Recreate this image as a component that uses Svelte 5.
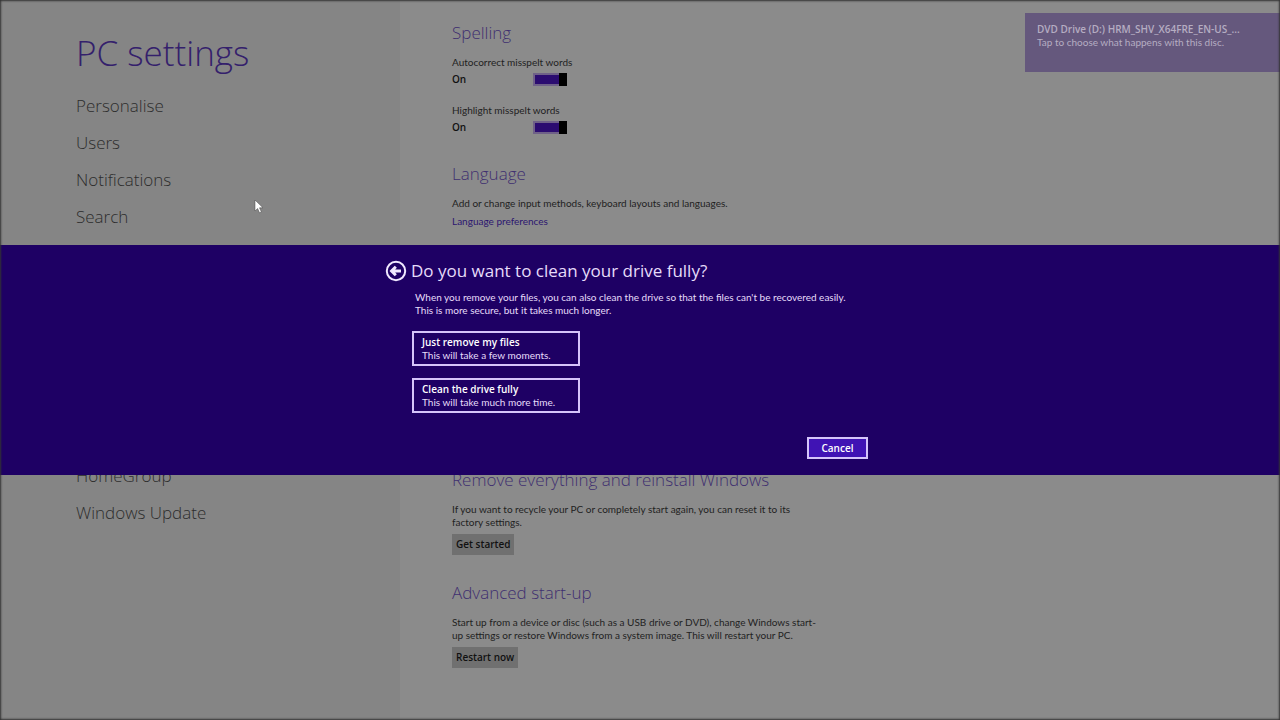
<script lang="ts">
  const categories = [
    "Personalise",
    "Users",
    "Notifications",
    "Search",
    "Share",
    "General",
    "Privacy",
    "Devices",
    "Ease of Access",
    "Sync your settings",
    "HomeGroup",
    "Windows Update",
  ];

  let autocorrect = true;
  let highlight = true;
</script>

<div class="screen">
  <nav>
    <h1>PC settings</h1>
    <ul>
      {#each categories as category}
        <li><a href="#settings">{category}</a></li>
      {/each}
    </ul>
  </nav>

  <main>
    <section>
      <h2>Spelling</h2>
      <div class="setting">
        <label for="autocorrect">Autocorrect misspelt words</label>
        <div class="switch">
          <span>{autocorrect ? "On" : "Off"}</span>
          <input id="autocorrect" type="checkbox" bind:checked={autocorrect} />
        </div>
      </div>
      <div class="setting">
        <label for="highlight">Highlight misspelt words</label>
        <div class="switch">
          <span>{highlight ? "On" : "Off"}</span>
          <input id="highlight" type="checkbox" bind:checked={highlight} />
        </div>
      </div>
    </section>

    <section>
      <h2>Language</h2>
      <p>Add or change input methods, keyboard layouts and languages.</p>
      <a class="more" href="#language">Language preferences</a>
    </section>

    <div class="recovery">
      <section>
        <h2>Remove everything and reinstall Windows</h2>
        <p>
          If you want to recycle your PC or completely start again, you can
          reset it to its factory settings.
        </p>
        <button>Get started</button>
      </section>

      <section>
        <h2>Advanced start-up</h2>
        <p>
          Start up from a device or disc (such as a USB drive or DVD), change
          Windows start-up settings or restore Windows from a system image. This
          will restart your PC.
        </p>
        <button>Restart now</button>
      </section>
    </div>
  </main>

  <aside class="toast">
    <strong>DVD Drive (D:) HRM_SHV_X64FRE_EN-US_...</strong>
    <span>Tap to choose what happens with this disc.</span>
  </aside>

  <svg class="pointer" viewBox="0 0 10 15" width="10" height="15">
    <path
      d="M1 1v11l2.600-2.500 1.900 4.300 1.900-.8-1.900-4.200h3.500z"
      fill="#fff"
      stroke="#444"
      stroke-width=".5"
    />
  </svg>

  <div class="overlay">
    <div class="band" role="dialog" aria-labelledby="dialog-title">
      <div class="dialog">
        <header>
          <button class="back" aria-label="Back">
            <svg viewBox="0 0 22 22" width="22" height="22">
              <circle cx="11" cy="11" r="9.200" />
              <path d="M16 11H7M10.800 6.800L6.600 11l4.200 4.200" />
            </svg>
          </button>
          <h2 id="dialog-title">Do you want to clean your drive fully?</h2>
        </header>
        <div class="body">
          <p>
            When you remove your files, you can also clean the drive so that the
            files can't be recovered easily.<br />
            This is more secure, but it takes much longer.
          </p>
          <button class="choice">
            <strong>Just remove my files</strong>
            <span>This will take a few moments.</span>
          </button>
          <button class="choice">
            <strong>Clean the drive fully</strong>
            <span>This will take much more time.</span>
          </button>
        </div>
        <footer>
          <button class="cancel">Cancel</button>
        </footer>
      </div>
    </div>
  </div>
</div>

<style>
  :global(body) {
    background: #8b8b8b;
  }

  .screen {
    position: relative;
    display: flex;
    min-height: 100vh;
    overflow: hidden;
    color: #222;
    font-family: Lato, "Open Sans", sans-serif;
    font-size: 10px;
    line-height: 13px;
  }

  .screen::after {
    content: "";
    position: absolute;
    inset: 0;
    box-shadow: inset 0 0 2px 1px #333;
    pointer-events: none;
  }

  h1,
  h2,
  li,
  strong,
  button,
  .switch {
    font-family: "Open Sans", "Noto Sans", sans-serif;
  }

  h1,
  h2,
  p,
  ul {
    margin: 0;
    padding: 0;
  }

  button {
    font-size: 10px;
    line-height: 13px;
    border: 0;
    cursor: pointer;
  }

  nav {
    box-sizing: border-box;
    flex: 0 0 400px;
    padding: 30px 20px 0 76px;
    background: #858585;
  }

  h1 {
    color: #34206c;
    font-size: 35px;
    font-weight: 300;
    line-height: 46px;
  }

  ul {
    margin-top: 11px;
    list-style: none;
  }

  li a {
    display: block;
    color: #2d2d2d;
    font-size: 17px;
    font-weight: 300;
    line-height: 37px;
    text-decoration: none;
  }

  main {
    display: flex;
    flex: 1;
    flex-direction: column;
    padding: 21px 20px 52px 52px;
  }

  section {
    max-width: 368px;
    margin-bottom: 26px;
  }

  .recovery {
    margin-top: auto;
  }

  .recovery section:last-child {
    margin-bottom: 0;
  }

  main h2 {
    margin-bottom: 11px;
    color: #3f2f70;
    font-size: 17px;
    font-weight: 300;
    line-height: 24px;
  }

  .setting {
    margin-bottom: 16px;
  }

  .setting:last-child {
    margin-bottom: 0;
  }

  .switch {
    display: flex;
    align-items: center;
    justify-content: space-between;
    width: 115px;
    height: 17px;
    margin-top: 2px;
    color: #111;
    font-weight: 600;
  }

  input {
    appearance: none;
    width: 34px;
    height: 13px;
    margin: 0;
    background:
      linear-gradient(#000, #000) right / 8px 100% no-repeat,
      linear-gradient(#2b0c70, #2b0c70) center / 30px 9px no-repeat,
      #6f6188;
  }

  input:not(:checked) {
    background:
      linear-gradient(#000, #000) left / 8px 100% no-repeat,
      linear-gradient(#777, #777) center / 30px 9px no-repeat,
      #6f6188;
  }

  .more {
    display: inline-block;
    margin-top: 5px;
    color: #2c1670;
    text-decoration: none;
  }

  main button {
    display: block;
    margin-top: 5px;
    padding: 4px;
    background: #707070;
    color: #111;
    font-weight: 600;
  }

  .toast {
    position: absolute;
    top: 13px;
    right: 0;
    box-sizing: border-box;
    width: 255px;
    height: 59px;
    padding: 10px 12px 0;
    background: #65587d;
    color: #b5adc2;
  }

  .toast strong,
  .toast span {
    display: block;
  }

  .toast strong {
    font-weight: 600;
  }

  .pointer {
    position: absolute;
    top: 199px;
    left: 254px;
  }

  .overlay {
    position: absolute;
    inset: 0;
    display: flex;
    align-items: center;
  }

  .band {
    width: 100%;
    background: #1e0064;
    color: #e6dcfa;
  }

  .dialog {
    box-sizing: border-box;
    max-width: 510px;
    margin: 0 auto;
    padding: 14px 27px 16px 0;
  }

  header {
    display: flex;
    align-items: center;
    gap: 4px;
  }

  header h2 {
    font-size: 17px;
    font-weight: 400;
    line-height: 24px;
  }

  .back {
    width: 22px;
    height: 22px;
    padding: 0;
    background: none;
  }

  .back svg {
    display: block;
    fill: none;
    stroke: #f0e8ff;
    stroke-width: 2;
  }

  .back path {
    stroke-width: 3;
  }

  .body {
    padding-left: 27px;
  }

  .body p {
    margin: 8px 0 14px;
    padding-left: 3px;
  }

  .choice {
    display: block;
    width: 168px;
    margin-bottom: 12px;
    padding: 3px 8px 2px;
    border: 2px solid #d5c4fa;
    background: none;
    color: #e6dcfa;
    text-align: left;
  }

  .choice strong,
  .choice span {
    display: block;
  }

  .choice strong {
    color: #fff;
    font-weight: 600;
  }

  .choice span {
    font-family: Lato, "Open Sans", sans-serif;
  }

  footer {
    display: flex;
    justify-content: flex-end;
    margin-top: 24px;
  }

  .cancel {
    width: 61px;
    padding: 3px 0 2px;
    border: 2px solid #d5c4fa;
    background: #4013b4;
    color: #fff;
    font-weight: 600;
  }
</style>
